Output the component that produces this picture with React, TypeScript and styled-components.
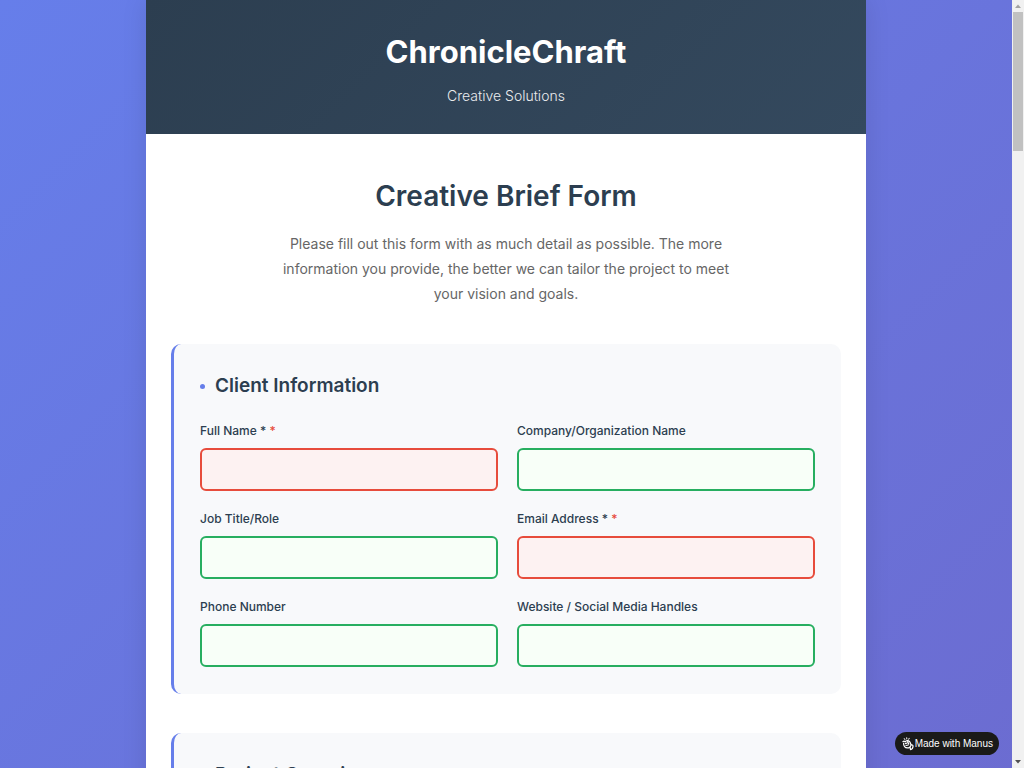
import React from "react";
import styled, { createGlobalStyle } from "styled-components";

const GlobalStyle = createGlobalStyle`
  *, *::before, *::after { box-sizing: border-box; }
  body { margin: 0; overflow: hidden; font-family: Inter, "Liberation Sans", sans-serif; color: #333; }
  h1, h2, h3, p { margin: 0; }
`;

const Frame = styled.div`
  display: grid;
  grid-template-columns: minmax(0, 1fr) 12px;
  height: 100vh;
`;

const Viewport = styled.div`
  position: relative;
  height: 100vh;
  overflow: hidden;
  background: linear-gradient(135deg, #667eea 0%, #764ba2 100%) 0 0 / 100% 4110px no-repeat;
`;

const Sheet = styled.div`
  max-width: 720px;
  min-height: 100%;
  margin: 0 auto;
  background: #fff;
  box-shadow: 0 0 24px rgba(0, 0, 0, 0.1);
`;

const Header = styled.header`
  padding: 26px 24px 27px;
  text-align: center;
  color: #fff;
  background: linear-gradient(135deg, #2c3e50 0%, #34495e 100%);
`;

const Brand = styled.h1`
  font-size: 31px;
  line-height: 52px;
  font-weight: 700;
`;

const Tagline = styled.p`
  margin-top: 7px;
  font-size: 14px;
  line-height: 22px;
  font-weight: 300;
  opacity: 0.9;
`;

const Main = styled.main`
  padding: 38px 25px;
`;

const Intro = styled.div`
  max-width: 470px;
  margin: 0 auto 38px;
  text-align: center;
`;

const Title = styled.h2`
  margin-bottom: 11px;
  font-size: 28px;
  line-height: 48px;
  font-weight: 600;
  color: #2c3e50;
`;

const Lead = styled.p`
  font-size: 14px;
  line-height: 25px;
  color: #666;
`;

const Section = styled.section`
  margin-bottom: 39px;
  padding: 26px 26px 27px;
  border-left: 3px solid #667eea;
  border-radius: 10px;
  background: #f8f9fb;
`;

const SectionTitle = styled.h3`
  display: flex;
  align-items: center;
  gap: 10px;
  margin-bottom: 19px;
  font-size: 19px;
  line-height: 32px;
  font-weight: 600;
  color: #2c3e50;

  &::before {
    content: "";
    width: 5px;
    height: 5px;
    border-radius: 50%;
    background: #667eea;
  }
`;

const FieldGrid = styled.div`
  display: grid;
  grid-template-columns: repeat(2, minmax(0, 1fr));
  gap: 18px 19px;
`;

const Field = styled.div`
  display: flex;
  flex-direction: column;
  gap: 7px;
`;

const Label = styled.label`
  font-size: 12px;
  line-height: 20px;
  font-weight: 500;
  color: #2c3e50;
`;

const Required = styled.span`
  color: #e74c3c;
`;

const Input = styled.input<{ $invalid: boolean }>`
  width: 100%;
  height: 43px;
  padding: 0 12px;
  border: 2px solid ${(p) => (p.$invalid ? "#e74c3c" : "#27ae60")};
  border-radius: 6px;
  background: ${(p) => (p.$invalid ? "#fdf2f2" : "#f8fff8")};
  font: 13px Inter, sans-serif;
  outline: none;
`;

const Badge = styled.a`
  position: absolute;
  right: 13px;
  bottom: 13px;
  display: flex;
  align-items: center;
  gap: 1px;
  height: 23px;
  padding: 0 6px 0 7px;
  border-radius: 12px;
  background: #1a1a19;
  color: #fff;
  font: 10px "Liberation Sans", Arial, sans-serif;
  text-decoration: none;
`;

const Scrollbar = styled.div`
  display: flex;
  flex-direction: column;
  align-items: center;
  background: #f1f1f1;
`;

const ArrowBox = styled.div`
  display: grid;
  place-items: center;
  width: 12px;
  height: 12px;
`;

const Thumb = styled.div`
  width: 10px;
  height: 139px;
  margin-bottom: auto;
  background: #c1c1c1;
`;

type FieldSpec = { id: string; label: string; type: string; required?: boolean };

const clientFields: FieldSpec[] = [
  { id: "full-name", label: "Full Name *", type: "text", required: true },
  { id: "company", label: "Company/Organization Name", type: "text" },
  { id: "job-title", label: "Job Title/Role", type: "text" },
  { id: "email", label: "Email Address *", type: "email", required: true },
  { id: "phone", label: "Phone Number", type: "tel" },
  { id: "website", label: "Website / Social Media Handles", type: "text" },
];

const HandIcon = () => (
  <svg width="12" height="14" viewBox="0 0 12 14" fill="none" stroke="#fff" strokeLinecap="round" strokeLinejoin="round" aria-hidden="true">
    <path strokeWidth="1" d="M2.3 1.600l.6 1M4.700 .8l.1 1.200M7.200 1.300l-.5 1" />
    <path strokeWidth="1.200" d="M.9 4.700c.8-.7 1.600-.5 2.200.1.900-1.300 3.300-1.700 4.500-.2.900 1.100 1 2.300 1.500 3.300M1.600 6.300c-.2 2.600 1.400 4.500 3.800 4.600.9 0 1.700-.2 2.300-.7M3.400 6.600l1.700-.6M4 8.500l2.200-.5M5.700 4.700l1.100 2.200" />
    <path strokeWidth="1.200" d="M9.100 7.900c1.400-.5 2 .4 1.900 1.600-.1 1.500-1 2.900-2.500 3.200l-.5-2.500z" />
  </svg>
);

export default function App() {
  return (
    <>
      <GlobalStyle />
      <Frame>
        <Viewport>
          <Sheet>
            <Header>
              <Brand>ChronicleChraft</Brand>
              <Tagline>Creative Solutions</Tagline>
            </Header>
            <Main>
              <Intro>
                <Title>Creative Brief Form</Title>
                <Lead>
                  Please fill out this form with as much detail as possible. The more information you
                  provide, the better we can tailor the project to meet your vision and goals.
                </Lead>
              </Intro>
              <form>
                <Section>
                  <SectionTitle>Client Information</SectionTitle>
                  <FieldGrid>
                    {clientFields.map((f) => (
                      <Field key={f.id}>
                        <Label htmlFor={f.id}>
                          {f.label}
                          {f.required && <Required> *</Required>}
                        </Label>
                        <Input id={f.id} name={f.id} type={f.type} $invalid={!!f.required} />
                      </Field>
                    ))}
                  </FieldGrid>
                </Section>
                <Section>
                  <SectionTitle>Project Overview</SectionTitle>
                </Section>
              </form>
            </Main>
          </Sheet>
          <Badge href="#">
            <HandIcon />
            Made with Manus
          </Badge>
        </Viewport>
        <Scrollbar aria-hidden="true">
          <ArrowBox>
            <svg width="6" height="4" viewBox="0 0 6 4"><path d="M0 4L3 0.500L6 4Z" fill="#a3a3a3" /></svg>
          </ArrowBox>
          <Thumb />
          <ArrowBox>
            <svg width="6" height="4" viewBox="0 0 6 4"><path d="M0 0L3 3.500L6 0Z" fill="#505050" /></svg>
          </ArrowBox>
        </Scrollbar>
      </Frame>
    </>
  );
}
